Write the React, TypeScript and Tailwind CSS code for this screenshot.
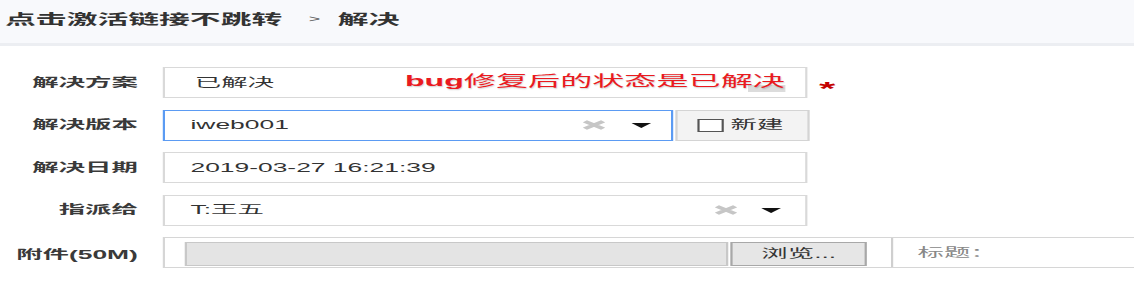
import React from "react";

function ClearX() {
  return (
    <svg width="10" height="10" viewBox="0 0 10 10" className="shrink-0">
      <path d="M0.8 1.3 L9.2 8.7 M9.2 1.3 L0.8 8.7" stroke="#c6c6c6" strokeWidth="3" strokeLinecap="butt" />
    </svg>
  );
}

function Caret() {
  return (
    <svg width="9" height="5" viewBox="0 0 9 5" className="shrink-0">
      <path d="M0 0 L9 0 L4.5 5 Z" fill="#111" />
    </svg>
  );
}

function Label({ children, extra = "" }: { children: React.ReactNode; extra?: string }) {
  return (
    <div className={`w-[62.7px] shrink-0 text-right text-[12px] font-bold text-[#3a3a3a] whitespace-nowrap ${extra}`}>
      {children}
    </div>
  );
}

export default function App() {
  return (
    <div className="w-[1134px] h-[283px] overflow-hidden bg-white font-['Liberation_Sans','Noto_Sans_CJK_SC',sans-serif]">
      <div className="w-[515.5px] origin-top-left scale-x-[2.2]">
        <header className="h-[46px] bg-[#f8f9fc] border-b-[3px] border-[#eceef2] flex items-center pl-[2.3px] pb-[4px] text-[#333]">
          <span className="text-[14px] font-bold whitespace-nowrap">点击激活链接不跳转</span>
          <span className="text-[9px] ml-[12px] mr-[8px] text-[#555]">&gt;</span>
          <span className="text-[14px] font-bold whitespace-nowrap">解决</span>
        </header>

        <div className="mt-[21px] flex flex-col gap-[11.5px]">
          {/* Row 1 */}
          <div className="flex items-center h-[31px]">
            <Label>解决方案</Label>
            <div className="relative ml-[10.9px] w-[293.7px] h-full border border-[#d9d9d9] flex items-center pl-[14px] text-[12px] text-[#333]">
              <span className="whitespace-nowrap">已解决</span>
              <div className="absolute left-[265px] top-[17px] w-[17px] h-[7px] bg-[#dcdcdc]" />
              <span className="absolute left-[109.5px] top-[3px] whitespace-nowrap text-[14.6px] text-[#ea1a1f] [text-shadow:0.3px_1px_1px_rgba(0,0,0,0.2)]">
                <b>bug</b>修复后的状态是已解决
              </span>
            </div>
            <span className="ml-[5px] mt-[12px] text-[19px] font-bold leading-none text-[#c40000]">*</span>
          </div>

          {/* Row 2 */}
          <div className="flex items-center h-[31px]">
            <Label>解决版本</Label>
            <div className="ml-[10.9px] w-[232px] h-full border border-[#5b9bf3] flex items-center pl-[12px] text-[12px] text-[#333]">
              <span className="flex-1 whitespace-nowrap">iweb001</span>
              <div className="mr-[11.5px]">
                <ClearX />
              </div>
              <div className="mr-[9px] flex items-center">
                <Caret />
              </div>
            </div>
            <div className="ml-[1px] w-[61px] h-full border border-[#d4d4d4] bg-[#f3f3f3] flex items-center pl-[9px]">
              <div className="w-[12px] h-[13px] border border-[#555] bg-white shrink-0" />
              <span className="ml-[3.5px] text-[12px] text-[#333] whitespace-nowrap">新建</span>
            </div>
          </div>

          {/* Row 3 */}
          <div className="flex items-center h-[31px]">
            <Label>解决日期</Label>
            <div className="ml-[10.9px] w-[293.7px] h-full border border-[#d9d9d9] flex items-center pl-[12px] text-[12px] text-[#333]">
              <span className="whitespace-nowrap">2019-03-27 16:21:39</span>
            </div>
          </div>

          {/* Row 4 */}
          <div className="flex items-center h-[31px]">
            <Label>指派给</Label>
            <div className="ml-[10.9px] w-[293.7px] h-full border border-[#d9d9d9] flex items-center pl-[12px] text-[12px] text-[#333]">
              <span className="flex-1 whitespace-nowrap">T:王五</span>
              <div className="mr-[11.5px]">
                <ClearX />
              </div>
              <div className="mr-[11px] flex items-center">
                <Caret />
              </div>
            </div>
          </div>

          {/* Row 5 */}
          <div className="flex items-center h-[31px]">
            <Label extra="pt-[5px]">附件(50M)</Label>
            <div className="ml-[10.9px] w-[460px] shrink-0 h-full border border-[#d6d6d6] flex">
              <div className="flex items-start pt-[4px] pl-[9.5px]">
                <div className="w-[247px] h-[24px] bg-[#e4e4e4] border border-[#c8c8c8]" />
                <div className="ml-[1px] w-[62px] h-[24px] bg-[#e6e6e6] border border-[#a8a8a8] flex items-center justify-center text-[12px] text-[#333] whitespace-nowrap">
                  浏览...
                </div>
              </div>
              <div className="ml-[11px] w-px bg-[#cfcfcf]" />
              <div className="pl-[11px] flex items-center text-[12px] text-[#888] whitespace-nowrap">标题：</div>
            </div>
          </div>
        </div>
      </div>
    </div>
  );
}
